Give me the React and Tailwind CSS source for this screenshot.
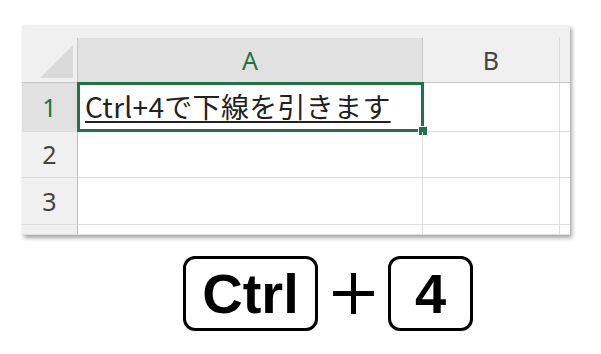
import React from "react";

const HEAD_FONT = { fontFamily: '"Noto Sans", "Noto Sans CJK JP", sans-serif' };
const CELL_FONT = { fontFamily: '"Noto Sans CJK JP", "Noto Sans", sans-serif' };
const KEY_FONT = { fontFamily: '"Liberation Sans", Arial, sans-serif' };

function RowHead({ label, h, selected }) {
  return (
    <div
      className={`w-[56px] shrink-0 flex items-center justify-center border-r border-[#bdbdbd] border-b border-b-[#dcdcdc] text-[25px] leading-none ${
        selected ? "bg-[#e1e1e1] text-[#217346]" : "bg-[#f0f0f0] text-[#444]"
      } ${h}`}
      style={HEAD_FONT}
    >
      {label}
    </div>
  );
}

function Row({ label, h, children }) {
  return (
    <div className={`flex ${h}`}>
      <RowHead label={label} h={h} selected={label === "1"} />
      <div className="w-[345px] shrink-0 border-r border-b border-[#dedede] relative">{children}</div>
      <div className="w-[137px] shrink-0 border-r border-b border-[#dedede]" />
      <div className="flex-1 border-b border-[#dedede]" />
    </div>
  );
}

function Key({ children, w }) {
  return (
    <div
      className={`${w} h-[75px] border-[3px] border-black rounded-[12px] flex items-center justify-center text-[56px] font-bold leading-none text-black`}
      style={KEY_FONT}
    >
      {children}
    </div>
  );
}

export default function App() {
  return (
    <div className="w-[601px] h-[354px] bg-white overflow-hidden">
      <div className="ml-[22px] mt-[25px] w-[548px] h-[210px] bg-white shadow-[2px_3px_4px_rgba(0,0,0,0.35)] overflow-hidden flex flex-col">
        {/* band above headers */}
        <div className="h-[13px] bg-[#f0f0f0] shrink-0" />

        {/* column headers */}
        <div className="h-[45px] flex shrink-0 border-b border-[#c6c6c6]" style={HEAD_FONT}>
          <div className="w-[56px] shrink-0 bg-[#f0f0f0] border-r border-[#c6c6c6] flex items-end justify-end pr-[4px] pb-[4px]">
            <svg width="33" height="33" viewBox="0 0 33 33">
              <polygon points="33,0 33,33 0,33" fill="#dadada" />
            </svg>
          </div>
          <div className="w-[345px] shrink-0 bg-[#e1e1e1] border-r border-[#c6c6c6] flex items-center justify-center text-[25px] leading-none text-[#217346]">
            A
          </div>
          <div className="w-[137px] shrink-0 bg-[#f0f0f0] border-r border-[#dadada] flex items-center justify-center text-[25px] leading-none text-[#444]">
            B
          </div>
          <div className="flex-1 bg-[#f0f0f0]" />
        </div>

        <Row label="1" h="h-[49px]">
          <div className="pt-[9px] pl-[7px] text-[28px] leading-[28px] tracking-[0.3px] text-[#222] underline decoration-2 underline-offset-[3px] whitespace-nowrap" style={CELL_FONT}>
            Ctrl+4で下線を引きます
          </div>
          <div className="absolute -left-[1px] -top-[1px] -right-[2px] -bottom-[1px] border-[3px] border-[#217346]" />
          <div className="absolute left-[340px] top-[43px] w-[10px] h-[10px] bg-[#217346] border border-white" />
        </Row>
        <Row label="2" h="h-[46px]" />
        <Row label="3" h="h-[47px]" />
        <Row label="" h="h-[10px]" />
      </div>

      <div className="mt-[21px] ml-[183px] flex items-center">
        <Key w="w-[135px]">Ctrl</Key>
        <svg width="41" height="41" viewBox="0 0 41 41" className="ml-[15px] mr-[14px]">
          <rect x="0" y="18" width="41" height="5" fill="#000" />
          <rect x="18" y="0" width="5" height="41" fill="#000" />
        </svg>
        <Key w="w-[85px]">4</Key>
      </div>
    </div>
  );
}
